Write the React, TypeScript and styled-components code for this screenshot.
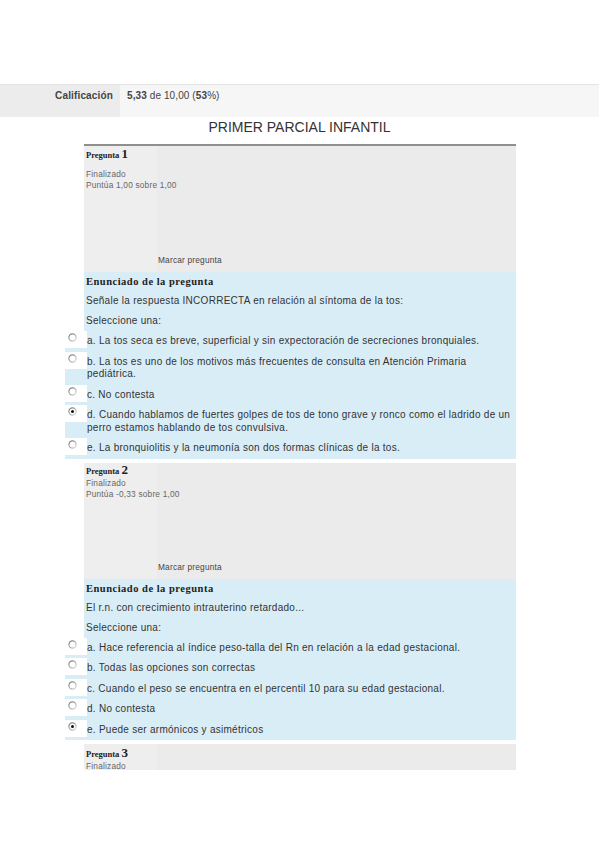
import React from 'react'
import styled, { createGlobalStyle } from 'styled-components'

const GlobalStyle = createGlobalStyle`
  html, body {
    margin: 0;
    padding: 0;
    background: #ffffff;
  }
  body {
    font-family: "Liberation Sans", Arial, sans-serif;
    color: #333333;
  }
`

const Page = styled.div`
  width: 599px;
  min-height: 848px;
  padding-top: 84px;
  box-sizing: border-box;
`

const GradeRow = styled.div`
  display: flex;
  height: 33px;
  border-top: 1px solid #e4e4e4;
  box-sizing: border-box;
  font-size: 10px;
  line-height: 12px;
`

const GradeLabel = styled.div`
  width: 120px;
  padding: 5px 7px 0 0;
  box-sizing: border-box;
  background: #ececec;
  text-align: right;
  font-weight: bold;
  letter-spacing: 0.15px;
  color: #444;
`

const GradeValue = styled.div`
  flex: 1;
  padding: 5px 0 0 7px;
  background: #f6f6f6;
  letter-spacing: 0.1px;
  color: #444;

  b {
    font-weight: bold;
  }
`

const Title = styled.h1`
  margin: 0;
  padding: 2px 0 9px;
  text-align: center;
  font-size: 14px;
  line-height: 16px;
  font-weight: normal;
  color: #333;
`

const Column = styled.div`
  margin-left: 84px;
  width: 432px;
  display: flex;
  flex-direction: column;
`

const Question = styled.section<{ $gap: number }>`
  margin-bottom: ${p => p.$gap}px;
`

const Info = styled.div<{ $height: number; $first?: boolean }>`
  display: flex;
  flex-direction: column;
  height: ${p => p.$height}px;
  box-sizing: border-box;
  padding: ${p => (p.$first ? '1px' : '0')} 2px 6px;
  border-top: ${p => (p.$first ? '2px solid #8f8f8f' : 'none')};
  background: linear-gradient(to right, #eeeeee 73px, #ebebeb 73px);
`

const QNo = styled.h3<{ $top?: number }>`
  margin: 0;
  padding-top: ${p => p.$top || 0}px;
  font-family: "Liberation Serif", "Times New Roman", serif;
  font-weight: bold;
  font-size: 8.5px;
  line-height: 14px;
  color: #222;

  span {
    font-size: 13px;
    margin-left: 2px;
  }
`

const State = styled.div<{ $spaced?: boolean }>`
  margin-top: ${p => (p.$spaced ? 7 : 0)}px;
  font-size: 8.3px;
  line-height: 11px;
  letter-spacing: 0.2px;
  color: #666;
`

const Grade = styled.div`
  font-size: 8.3px;
  line-height: 11px;
  letter-spacing: 0.2px;
  color: #666;
`

const Flag = styled.div`
  margin-top: auto;
  padding-left: 72px;
  font-size: 8.3px;
  line-height: 11px;
  letter-spacing: 0.2px;
  color: #444;
`

const Formulation = styled.div`
  background: #d9edf7;
`

const FormHeading = styled.h4`
  margin: 0;
  padding-left: 2px;
  height: 19px;
  line-height: 19px;
  font-family: "Liberation Serif", "Times New Roman", serif;
  font-weight: bold;
  font-size: 10.5px;
  letter-spacing: 0.5px;
  color: #222;
`

const QText = styled.div`
  padding-left: 2px;
  line-height: 20px;
  font-size: 10px;
  letter-spacing: 0.27px;
  color: #333;
`

const Answers = styled.div`
  margin-left: -19px;
  background: #d9edf7;
  display: flex;
  flex-direction: column;
`

const AnswerRow = styled.div`
  display: flex;
  align-items: flex-start;
`

const RadioBox = styled.div`
  width: 22px;
  height: 17px;
  flex: none;
  background: #ffffff;
  padding: 2px 0 0 3px;
  box-sizing: border-box;
`

const AnswerLabel = styled.div`
  flex: 1;
  padding: 4px 4px 4px 0;
  font-size: 10px;
  line-height: 12.5px;
  letter-spacing: 0.27px;
  color: #333;
`

const Radio: React.FC<{ checked?: boolean; id: string }> = ({ checked, id }) => (
  <svg width="9" height="9" viewBox="0 0 9 9" style={{ display: 'block' }}>
    <defs>
      <linearGradient id={id} x1="0" y1="0" x2="1" y2="1">
        <stop offset="0" stopColor="#6f6f6f" />
        <stop offset="1" stopColor="#dcdcdc" />
      </linearGradient>
    </defs>
    <circle cx="4.5" cy="4.5" r="3.6" fill="#fff" stroke={`url(#${id})`} strokeWidth="1.1" />
    {checked && <circle cx="4.5" cy="4.5" r="1.5" fill="#111" />}
  </svg>
)

type QuestionData = {
  no: number
  grade?: string
  text: string
  options: string[]
  selected: number
}

const questions: QuestionData[] = [
  {
    no: 1,
    grade: 'Puntúa 1,00 sobre 1,00',
    text: 'Señale la respuesta INCORRECTA en relación al síntoma de la tos:',
    options: [
      'a. La tos seca es breve, superficial y sin expectoración de secreciones bronquiales.',
      'b. La tos es uno de los motivos más frecuentes de consulta en Atención Primaria pediátrica.',
      'c. No contesta',
      'd. Cuando hablamos de fuertes golpes de tos de tono grave y ronco como el ladrido de un perro estamos hablando de tos convulsiva.',
      'e. La bronquiolitis y la neumonía son dos formas clínicas de la tos.',
    ],
    selected: 3,
  },
  {
    no: 2,
    grade: 'Puntúa -0,33 sobre 1,00',
    text: 'El r.n. con crecimiento intrauterino retardado...',
    options: [
      'a. Hace referencia al índice peso-talla del Rn en relación a la edad gestacional.',
      'b. Todas las opciones son correctas',
      'c. Cuando el peso se encuentra en el percentil 10 para su edad gestacional.',
      'd. No contesta',
      'e. Puede ser armónicos y asimétricos',
    ],
    selected: 4,
  },
]

export default function App() {
  return (
    <Page>
      <GlobalStyle />
      <GradeRow>
        <GradeLabel>Calificación</GradeLabel>
        <GradeValue>
          <b>5,33</b> de 10,00 (<b>53</b>%)
        </GradeValue>
      </GradeRow>
      <Title>PRIMER PARCIAL INFANTIL</Title>
      <Column>
        {questions.map((q, qi) => (
          <Question key={q.no} $gap={qi === 0 ? 4 : 4}>
            <Info $height={qi === 0 ? 128 : 116} $first={qi === 0}>
              <QNo>
                Pregunta<span>{q.no}</span>
              </QNo>
              <State $spaced={qi === 0}>Finalizado</State>
              <Grade>{q.grade}</Grade>
              <Flag>Marcar pregunta</Flag>
            </Info>
            <Formulation>
              <FormHeading>Enunciado de la pregunta</FormHeading>
              <QText>{q.text}</QText>
              <QText>Seleccione una:</QText>
              <Answers>
                {q.options.map((opt, oi) => (
                  <AnswerRow key={oi}>
                    <RadioBox>
                      <Radio id={`r${q.no}-${oi}`} checked={oi === q.selected} />
                    </RadioBox>
                    <AnswerLabel>{opt}</AnswerLabel>
                  </AnswerRow>
                ))}
              </Answers>
            </Formulation>
          </Question>
        ))}
        <Info $height={26}>
          <QNo $top={2}>
            Pregunta<span>3</span>
          </QNo>
          <State>Finalizado</State>
        </Info>
      </Column>
    </Page>
  )
}
